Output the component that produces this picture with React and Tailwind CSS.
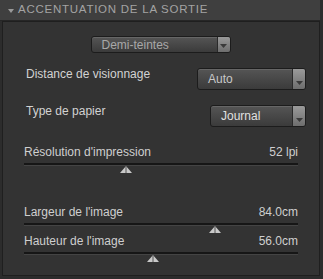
import React from 'react';

const Select = ({ value, className, textClass }) => (
  <div className={`flex rounded-[3px] border border-[#1c1c1c] bg-gradient-to-b from-[#555] to-[#3b3b3b] shadow-[inset_0_1px_0_#666] ${className}`}>
    <div className={`flex flex-1 items-center pl-[10px] text-[12px] ${textClass}`}>{value}</div>
    <div className="flex w-[13px] items-end justify-center rounded-r-[2px] border-l border-[#2a2a2a] bg-gradient-to-b from-[#9a9a9a] to-[#6e6e6e] pb-[4px]">
      <svg width="7" height="4" viewBox="0 0 7 4"><path d="M0 0h7L3.5 4z" fill="#3a3a3a" /></svg>
    </div>
  </div>
);

const Slider = ({ label, value, pos }) => (
  <div className="px-[21px]">
    <div className="flex items-center justify-between text-[12px] leading-[16px] text-[#cfcfcf]">
      <span>{label}</span>
      <span>{value}</span>
    </div>
    <div className="mt-[3px] h-[2px] bg-[#161616] shadow-[0_1px_0_#444]" />
    <div className="relative h-[8px]">
      <svg className="absolute top-[1px]" style={{ left: pos }} width="12" height="7" viewBox="0 0 12 7">
        <path d="M6 0L12 7H0z" fill="#c9c9c9" />
        <path d="M6 0v7" stroke="#555" strokeWidth="1" />
      </svg>
    </div>
  </div>
);

export default function App() {
  return (
    <div className="h-[279px] w-[323px] bg-[#2c2c2c] font-['Liberation_Sans',sans-serif]">
      <div className="flex h-[21px] w-[320px] items-center border-b border-[#262626] bg-[#3f3f3f] pl-[8px]">
        <svg width="6" height="4" viewBox="0 0 6 4" className="mt-[2px]"><path d="M0 0h6L3 4z" fill="#9a9a9a" /></svg>
        <span className="ml-[4px] text-[11.5px] tracking-[0.75px] text-[#a3a3a3]">ACCENTUATION DE LA SORTIE</span>
      </div>
      <div className="ml-[2px] h-[255px] w-[318px] border border-[#1f1f1f] bg-[#333333]">
        <div className="flex justify-center pt-[14px]">
          <Select value="Demi-teintes" className="ml-[-1px] h-[17px] w-[140px]" textClass="text-[#a8a8a8]" />
        </div>
        <div className="mt-[15px] flex items-center justify-between pl-[23px] pr-[13px]">
          <span className="mt-[-10px] text-[12px] text-[#d2d2d2]">Distance de visionnage</span>
          <Select value="Auto" className="h-[22px] w-[109px]" textClass="text-[#c8c8c8]" />
        </div>
        <div className="mt-[15px] flex items-center justify-between pl-[23px] pr-[13px]">
          <span className="mt-[-10px] text-[12px] text-[#d2d2d2]">Type de papier</span>
          <Select value="Journal" className="h-[22px] w-[96px]" textClass="text-[#e0e0e0]" />
        </div>
        <div className="mt-[17px]">
          <Slider label="Résolution d'impression" value="52 lpi" pos={96} />
        </div>
        <div className="mt-[31px]">
          <Slider label="Largeur de l'image" value="84.0cm" pos={185} />
        </div>
        <div className="mt-0">
          <Slider label="Hauteur de l'image" value="56.0cm" pos={123} />
        </div>
      </div>
    </div>
  );
}
